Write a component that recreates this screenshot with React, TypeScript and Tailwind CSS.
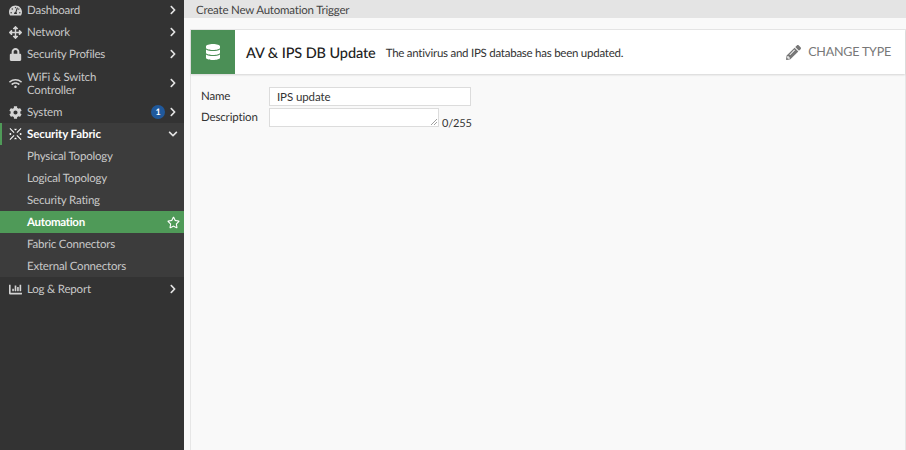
import type { ReactNode } from "react";
import {
  FaArrowsAlt,
  FaChartBar,
  FaChevronDown,
  FaChevronRight,
  FaCog,
  FaDatabase,
  FaLock,
  FaPencilAlt,
  FaRegStar,
  FaTachometerAlt,
  FaWifi,
} from "react-icons/fa";

function FabricIcon() {
  return (
    <svg width="14" height="14" viewBox="0 0 14 14" fill="none" stroke="currentColor" strokeWidth="1.1">
      <path d="M1 1l4.500 4.500M13 1L8.500 5.500M1 13l4.500-4.500M13 13L8.500 8.500M6 1.500l1 1 1-1M6 12.500l1-1 1 1" />
      <circle cx="1.500" cy="7" r="1" fill="currentColor" stroke="none" />
      <circle cx="12.500" cy="7" r="1" fill="currentColor" stroke="none" />
    </svg>
  );
}

type MenuRowProps = {
  icon: ReactNode;
  label: ReactNode;
  badge?: string;
  height?: string;
};

function MenuRow({ icon, label, badge, height = "h-[22px]" }: MenuRowProps) {
  return (
    <div className={`flex items-center pr-[6px] pl-[9px] ${height}`}>
      <span className="flex w-[13px] shrink-0 justify-center text-[13px] text-[#d4d4d4]">{icon}</span>
      <span className="ml-[5px] flex-1 pt-[1px] text-[11.5px] leading-[13px] tracking-[-0.2px] text-[#c8c8c8]">{label}</span>
      {badge && (
        <span className="mr-[3px] flex h-[14px] w-[14px] items-center justify-center rounded-full bg-[#20599c] text-[9px] font-bold text-white">
          {badge}
        </span>
      )}
      <FaChevronRight className="text-[10px] text-[#e4e4e4]" />
    </div>
  );
}

function SubRow({ label }: { label: string }) {
  return <div className="flex h-[22px] items-center pt-[2px] pl-[27px] text-[11.5px] tracking-[-0.2px] text-[#c8c8c8]">{label}</div>;
}

export default function App() {
  return (
    <div className="flex h-[450px] w-[906px] overflow-hidden bg-[#f9f9f9] font-['Lato','Open_Sans',sans-serif] [text-rendering:geometricPrecision]">
      <aside className="w-[184px] shrink-0 bg-[#333333]">
        <div className="mt-[-1px]">
          <MenuRow icon={<FaTachometerAlt />} label="Dashboard" />
          <MenuRow icon={<FaArrowsAlt />} label="Network" />
          <MenuRow icon={<FaLock />} label="Security Profiles" />
          <MenuRow
            height="h-[36px]"
            icon={<FaWifi />}
            label={
              <>
                WiFi &amp; Switch
                <br />
                Controller
              </>
            }
          />
          <MenuRow icon={<FaCog />} label="System" badge="1" />
          <div className="flex h-[22px] items-center border-l-[2px] border-[#4f9a58] bg-[#3c3c3c] pr-[6px] pl-[7px]">
            <span className="flex w-[13px] shrink-0 justify-center text-white">
              <FabricIcon />
            </span>
            <span className="ml-[5px] flex-1 pt-[2px] text-[11.5px] font-bold tracking-[-0.1px] text-white">Security Fabric</span>
            <FaChevronDown className="text-[10px] text-[#e4e4e4]" />
          </div>
          <div className="bg-[#3c3c3c]">
            <SubRow label="Physical Topology" />
            <SubRow label="Logical Topology" />
            <SubRow label="Security Rating" />
            <div className="flex h-[22px] items-center justify-between bg-[#4f9a58] pr-[4px] pl-[27px] text-[11.5px] font-bold tracking-[-0.3px] text-white">
              <span className="pt-[2px]">Automation</span>
              <FaRegStar className="text-[13px]" />
            </div>
            <SubRow label="Fabric Connectors" />
            <SubRow label="External Connectors" />
          </div>
          <MenuRow height="h-[24px]" icon={<FaChartBar />} label="Log & Report" />
        </div>
      </aside>

      <main className="flex min-w-0 flex-1 flex-col">
        <div className="flex h-[18px] items-center bg-[#e4e4e4] pt-[3px] pl-[12px] text-[11.5px] tracking-[-0.2px] text-[#444444]">
          Create New Automation Trigger
        </div>
        <section className="mt-[11px] ml-[6px] flex-1 border-x border-t border-[#e6e6e6]">
          <header className="flex h-[44px] items-center bg-white shadow-[0_1px_2px_rgba(0,0,0,0.15)]">
            <div className="flex h-full w-[44px] items-center justify-center bg-[#4b8f56] text-[16px] text-white">
              <FaDatabase />
            </div>
            <h1 className="ml-[11px] pt-[3px] text-[14.5px] font-medium tracking-[-0.1px] text-[#222222]">AV &amp; IPS DB Update</h1>
            <p className="ml-[10px] flex-1 pt-[4px] text-[11.5px] tracking-[-0.25px] text-[#333333]">The antivirus and IPS database has been updated.</p>
            <div className="mr-[14px] flex items-center gap-[7px] text-[12.5px] tracking-[-0.2px] text-[#777777]">
              <FaPencilAlt className="text-[15px]" />
              CHANGE TYPE
            </div>
          </header>
          <div className="grid grid-cols-[68px_auto] gap-y-[2px] pt-[13px] pl-[10px] text-[11.5px] tracking-[-0.15px] text-[#333333]">
            <label className="leading-[19px]">Name</label>
            <input
              readOnly
              value="IPS update"
              className="h-[19px] w-[202px] border border-[#dcdcdc] bg-white pl-[7px] text-[11.5px] tracking-[-0.1px] text-[#333333] outline-none"
            />
            <label className="leading-[19px]">Description</label>
            <div className="flex items-end">
              <div className="relative h-[19px] w-[170px] border border-[#dcdcdc] bg-white">
                <svg className="absolute right-[1px] bottom-[1px]" width="7" height="7" viewBox="0 0 7 7" stroke="#888888" strokeWidth="0.8">
                  <path d="M1 7l6-6M4 7l3-3" />
                </svg>
              </div>
              <span className="mb-[-3px] ml-[3px] text-[11px] leading-[13px]">0/255</span>
            </div>
          </div>
        </section>
      </main>
    </div>
  );
}
